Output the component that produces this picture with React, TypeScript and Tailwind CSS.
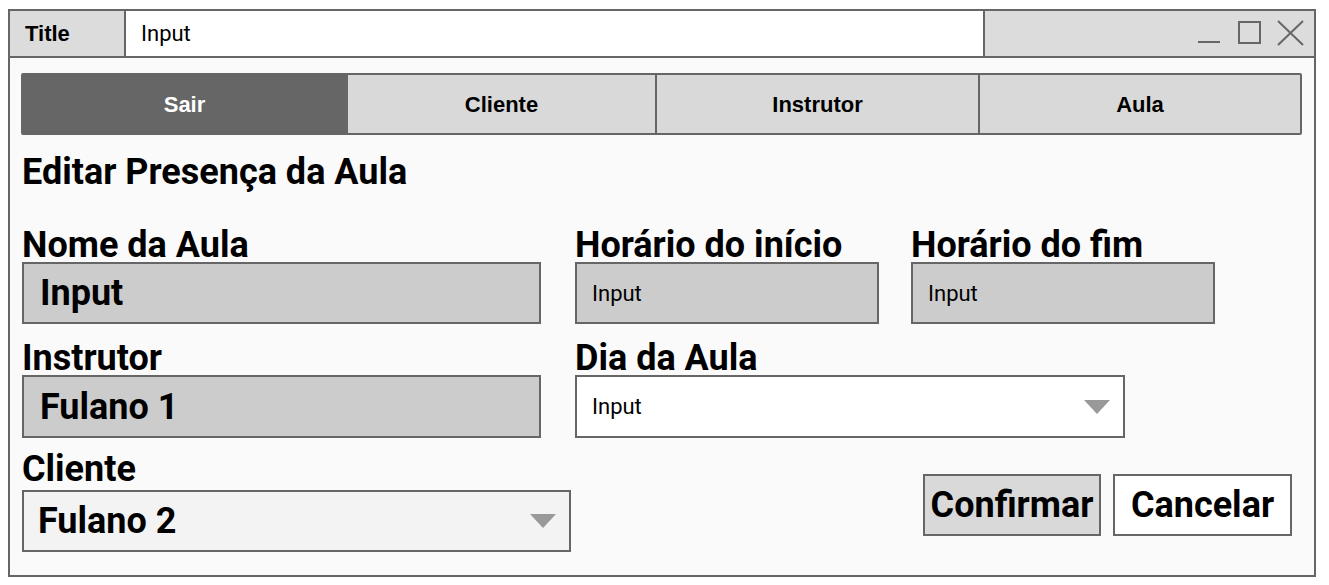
import React from "react";

const roboto = { fontFamily: "Roboto, 'Liberation Sans', sans-serif" };
const arial = { fontFamily: "'Liberation Sans', Arial, sans-serif" };

function Tri() {
  return (
    <svg width="26" height="14" viewBox="0 0 26 14">
      <polygon points="0,0 26,0 13,14" fill="#999999" />
    </svg>
  );
}

function Label({ children, tall }: { children: React.ReactNode; tall?: boolean }) {
  return (
    <div
      className={
        tall
          ? "h-[38px] text-[36px] leading-[34px] font-bold text-black whitespace-nowrap"
          : "h-[34px] text-[36px] leading-[34px] font-bold text-black whitespace-nowrap"
      }
      style={roboto}
    >
      {children}
    </div>
  );
}

export default function App() {
  return (
    <div className="pl-[8px] pt-[9px] bg-white min-h-[585px]" style={roboto}>
      <div className="w-[1308px] h-[568px] border-2 border-[#666666] bg-[#fafafa] flex flex-col">
        {/* Title bar */}
        <div className="flex h-[47px] border-b-2 border-[#666666] shrink-0">
          <div
            className="w-[116px] bg-[#dcdcdc] border-r-2 border-[#666666] flex items-center pl-[15px] text-[22px] font-bold text-black"
            style={arial}
          >
            Title
          </div>
          <div className="w-[859px] bg-white border-r-2 border-[#666666] flex items-center pl-[15px] text-[22px] text-black">
            Input
          </div>
          <div className="flex-1 bg-[#dcdcdc] flex items-center justify-end pr-[8px]">
            <svg width="110" height="28" viewBox="0 0 110 28">
              <line x1="2" y1="22" x2="24" y2="22" stroke="#666666" strokeWidth="2" />
              <rect x="43" y="2" width="21" height="21" fill="none" stroke="#666666" strokeWidth="2" />
              <line x1="82" y1="1" x2="107" y2="25" stroke="#666666" strokeWidth="2" />
              <line x1="107" y1="1" x2="82" y2="25" stroke="#666666" strokeWidth="2" />
            </svg>
          </div>
        </div>

        {/* Tabs */}
        <div
          className="mt-[15px] ml-[11px] w-[1281px] h-[62px] flex border-2 border-[#666666] rounded-[2px] bg-[#d9d9d9] text-[22px] font-bold text-black shrink-0"
          style={arial}
        >
          <div className="w-[323px] bg-[#666666] text-white flex items-center justify-center">Sair</div>
          <div className="w-[309px] border-l-2 border-[#666666] flex items-center justify-center">Cliente</div>
          <div className="w-[323px] border-l-2 border-[#666666] flex items-center justify-center">Instrutor</div>
          <div className="flex-1 border-l-2 border-[#666666] flex items-center justify-center">Aula</div>
        </div>

        {/* Form */}
        <div className="pl-[12px] pr-[22px] flex flex-col">
          <div className="mt-[19px] h-[36px] text-[36px] leading-[36px] font-bold text-black whitespace-nowrap">
            Editar Presença da Aula
          </div>

          {/* Row 1 */}
          <div className="mt-[38px] flex">
            <div className="w-[519px] flex flex-col">
              <Label>Nome da Aula</Label>
              <div className="h-[62px] bg-[#cccccc] border-2 border-[#666666] flex items-center pl-[16px] text-[36px] font-bold text-black">
                Input
              </div>
            </div>
            <div className="ml-[34px] w-[304px] flex flex-col">
              <Label>Horário do início</Label>
              <div className="h-[62px] bg-[#cccccc] border-2 border-[#666666] flex items-center pl-[15px] text-[22px] text-black">
                Input
              </div>
            </div>
            <div className="ml-[32px] w-[304px] flex flex-col">
              <Label>Horário do fim</Label>
              <div className="h-[62px] bg-[#cccccc] border-2 border-[#666666] flex items-center pl-[15px] text-[22px] text-black">
                Input
              </div>
            </div>
          </div>

          {/* Row 2 */}
          <div className="mt-[17px] flex">
            <div className="w-[519px] flex flex-col">
              <Label>Instrutor</Label>
              <div className="h-[63px] bg-[#cccccc] border-2 border-[#666666] flex items-center pl-[16px] text-[36px] font-bold text-black">
                Fulano 1
              </div>
            </div>
            <div className="ml-[34px] w-[550px] flex flex-col">
              <Label>Dia da Aula</Label>
              <div className="h-[63px] bg-white border-2 border-[#666666] flex items-center justify-between pl-[15px] pr-[13px] text-[22px] text-black">
                <span>Input</span>
                <Tri />
              </div>
            </div>
          </div>

          {/* Row 3 */}
          <div className="mt-[14px] flex justify-between">
            <div className="w-[549px] flex flex-col">
              <Label tall>Cliente</Label>
              <div className="h-[62px] bg-[#f3f3f3] border-2 border-[#666666] flex items-center justify-between pl-[14px] pr-[13px] text-[36px] font-bold text-black">
                <span>Fulano 2</span>
                <Tri />
              </div>
            </div>
            <div className="mt-[22px] flex gap-[12px] h-[62px]">
              <div className="w-[178px] h-[62px] bg-[#d9d9d9] border-2 border-[#666666] flex items-center justify-center text-[36px] font-bold text-black whitespace-nowrap">
                Confirmar
              </div>
              <div className="w-[179px] h-[62px] bg-white border-2 border-[#666666] flex items-center justify-center text-[36px] font-bold text-black whitespace-nowrap">
                Cancelar
              </div>
            </div>
          </div>
        </div>
      </div>
    </div>
  );
}
